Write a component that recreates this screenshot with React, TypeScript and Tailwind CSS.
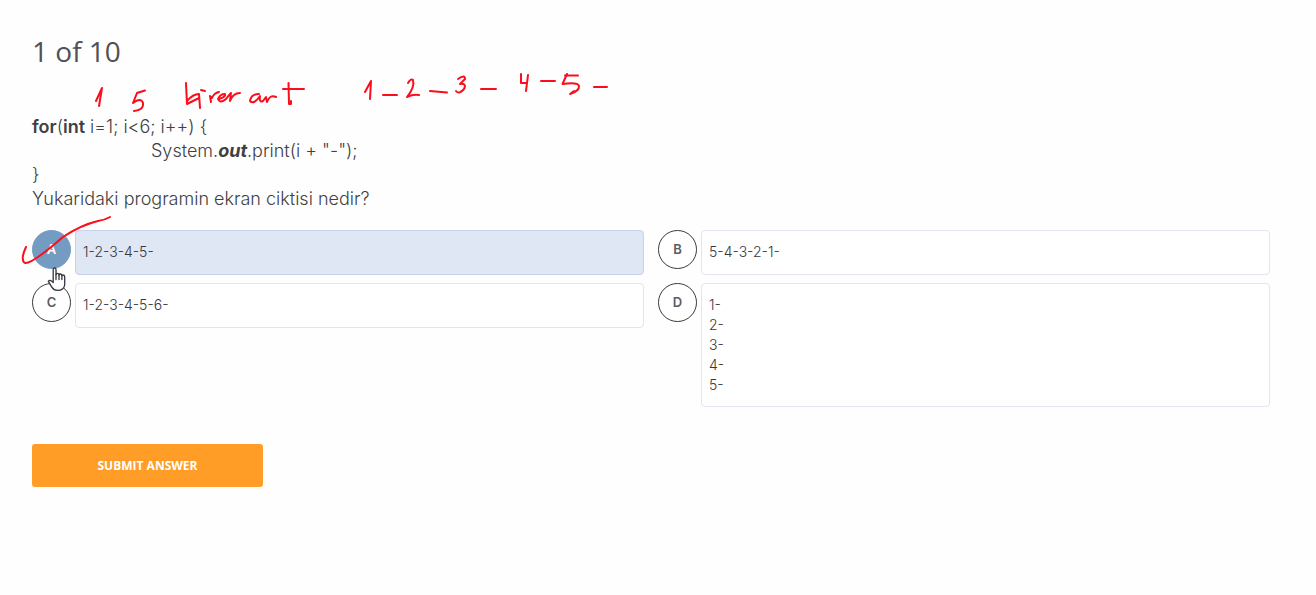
import { useState } from 'react';

type Option = { id: string; lines: string[] };

const options: Option[] = [
  { id: 'A', lines: ['1-2-3-4-5-'] },
  { id: 'B', lines: ['5-4-3-2-1-'] },
  { id: 'C', lines: ['1-2-3-4-5-6-'] },
  { id: 'D', lines: ['1-', '2-', '3-', '4-', '5-'] },
];

function OptionRow({ option, checked, onSelect }: { option: Option; checked: boolean; onSelect: () => void }) {
  return (
    <label className="flex cursor-pointer items-start gap-1">
      <input type="radio" name="answer" value={option.id} checked={checked} onChange={onSelect} className="sr-only" />
      <span
        className={`flex size-[39px] shrink-0 items-center justify-center rounded-full border text-[13px] font-semibold ${
          checked ? 'border-[#749bc1] bg-[#749bc1] text-white' : 'border-[#3a3a3a] bg-white text-[#5c5c60]'
        }`}
      >
        {option.id}
      </span>
      <span
        className={`min-h-[45px] flex-1 rounded border px-[7px] py-[11px] text-sm leading-5 font-light text-[#38383c] ${
          checked ? 'border-[#c6d3e8] bg-[#dfe6f4]' : 'border-[#e1e5ee] bg-white'
        }`}
      >
        {option.lines.map((line) => (
          <span key={line} className="block">
            {line}
          </span>
        ))}
      </span>
    </label>
  );
}

function PenStrokes() {
  return (
    <svg
      className="pointer-events-none absolute top-0 left-0"
      width="640"
      height="300"
      viewBox="0 0 640 300"
      fill="none"
      stroke="#fb0d1b"
      strokeWidth="2"
      strokeLinecap="round"
      strokeLinejoin="round"
      aria-hidden="true"
    >
      <path d="M96 101 L102 88 L99 106" />
      <path d="M145 90.5 L137 93 L133 103 Q141 97 143 103 Q144 110 134 111" />
      <path d="M186 83 L187 104 L199 98 M187 101 Q193 94 199 94 L200 108 M201 90 L205 91" />
      <path d="M211 102 L210 96 L212 98 Q214 93 219 92 M219 99 Q226 97 225 94 Q220 94 218 99 Q220 104 226 99 Q229 95 231 93 L230 101 Q233 93 240 93" />
      <path d="M259 94 Q251 94 250 101 Q254 105 260 96 Q259 103 263 101 L266 97 L267 102 Q270 94 276 97" />
      <path d="M288.5 83 L289 104 H291 V101 M283 89 H304" />
      <path d="M365 92 L371 81 L370 99" />
      <path d="M383 95 H397" />
      <path d="M408 83 Q411 78 413 80 Q415 87 407 97 Q413 94 419 95" />
      <path d="M430 91 L447 92.5" />
      <path d="M458 79 Q465 74 465 79 L460 84 Q467 83 464 89 Q459 95 456 91" />
      <path d="M481 89 H496" />
      <path d="M521 74 L521 83 H527 M528 75 L526 91" />
      <path d="M541 81 H555" />
      <path d="M578 75.5 H565 M567 74 L562.5 84 Q578 82 579 86 Q579.5 91 570 94 L574 91" />
      <path d="M594 87 H607" />
      <path d="M26 247 Q20 260 25 263 Q32 264 63 237 Q81 225 98 221 Q105 220 110 217" />
    </svg>
  );
}

function HandPointer() {
  return (
    <svg
      className="pointer-events-none absolute top-[267px] left-[47px]"
      width="20"
      height="25"
      viewBox="0 0 20 25"
      fill="#fefefe"
      stroke="#34353d"
      strokeWidth="1.3"
      strokeLinejoin="round"
      strokeLinecap="round"
      aria-hidden="true"
    >
      <path d="M6.2 15.5 V2.4 Q6.2 1 7.6 1 Q9 1 9 2.4 V7.5 Q9.4 6.2 10.6 6.3 Q11.9 6.4 12 8 Q12.4 6.8 13.6 7 Q14.8 7.2 14.9 8.7 Q15.3 7.8 16.3 8 Q17.7 8.2 17.7 10 V17.5 Q17.7 20 15.5 22 Q14 23.4 10.5 23.4 Q6.7 23.4 4.8 20.2 L1.3 14.2 Q2.8 12.6 4.5 14 Z" />
      <path d="M9 7.5 V12.5 M12 8 V12.5 M14.9 8.7 V12.5" />
    </svg>
  );
}

export default function App() {
  const [answer, setAnswer] = useState('A');

  return (
    <main className="relative min-h-screen bg-[#fefefe] pt-8 pr-[46px] pb-8 pl-8 font-['Inter',sans-serif] text-[#505055]">
      <h1 className="font-['Open_Sans',sans-serif] text-[28px] leading-[39px]">1 of 10</h1>

      <form onSubmit={(event) => event.preventDefault()}>
        <div className="mt-11 text-lg leading-6 font-light text-[#3f3f44]">
          <p>
            <b className="font-semibold">for</b>(<b className="font-semibold">int</b> i=1; i&lt;6; i++) {'{'}
          </p>
          <p className="pl-[119px]">
            System.<b className="font-bold italic">out</b>.print(i + "-");
          </p>
          <p>{'}'}</p>
          <p>Yukaridaki programin ekran ciktisi nedir?</p>
        </div>

        <fieldset aria-label="Answers" className="mt-[19px] grid grid-cols-2 items-start gap-x-[14px] gap-y-2">
          {options.map((option) => (
            <OptionRow
              key={option.id}
              option={option}
              checked={answer === option.id}
              onSelect={() => setAnswer(option.id)}
            />
          ))}
        </fieldset>

        <button
          type="submit"
          className="mt-[37px] h-[43px] w-[231px] cursor-pointer rounded-[3px] bg-[#ff9d26] font-['Open_Sans',sans-serif] text-xs font-bold text-white"
        >
          SUBMIT ANSWER
        </button>
      </form>

      <PenStrokes />
      <HandPointer />
    </main>
  );
}
